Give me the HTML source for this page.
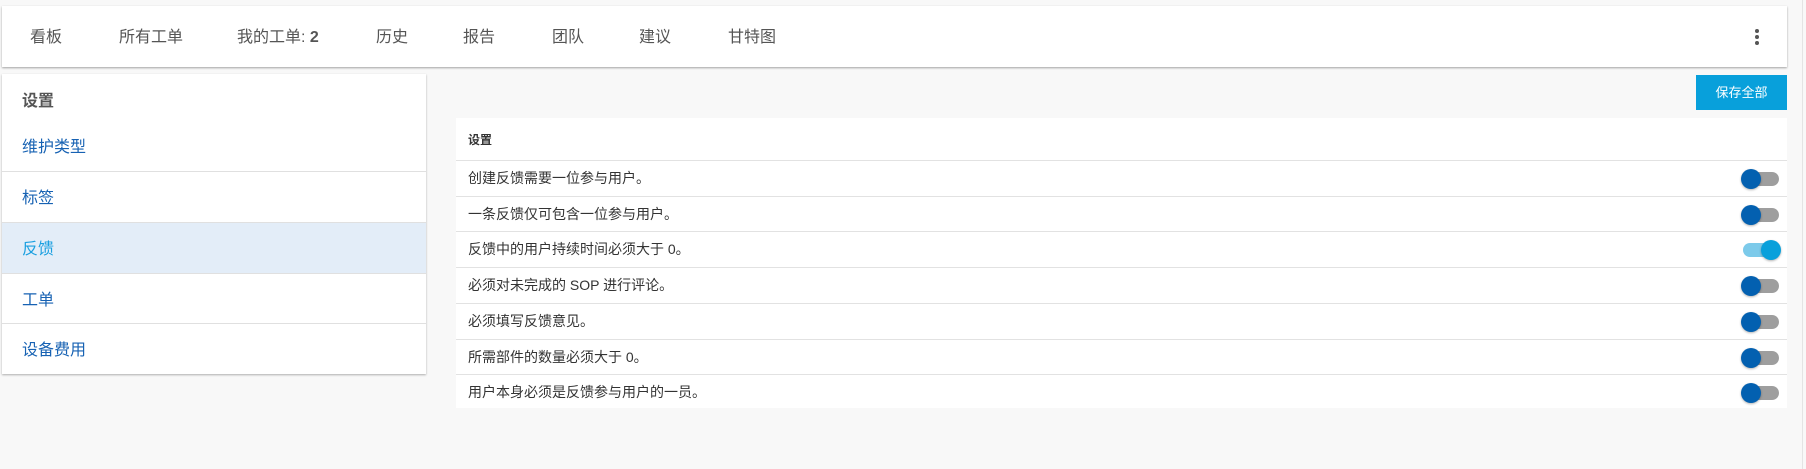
<!DOCTYPE html>
<html><head><meta charset="utf-8"><style>
*{margin:0;padding:0;box-sizing:border-box}
body{width:1806px;height:469px;background:#f8f8f8;font-family:"Liberation Sans","Noto Sans CJK SC",sans-serif;position:relative;overflow:hidden}
.nav{position:absolute;left:2px;top:6px;width:1785px;height:61px;background:#fff;box-shadow:0 1px 2px rgba(0,0,0,.35)}
.nav span{position:absolute;top:22px;font-size:16px;color:#555;line-height:20px}
.kebab{position:absolute;left:1753px;top:23px;width:4px}
.kebab i{display:block;width:4px;height:4px;border-radius:2px;background:#555;margin-bottom:2px}
.left{position:absolute;left:2px;top:74px;width:424px;height:300px;background:#fff;box-shadow:0 1px 2px rgba(0,0,0,.3)}
.left .t{position:absolute;left:20px;top:13px;font-size:16px;color:#555;font-weight:bold}
.item{position:absolute;left:0;width:424px;height:51px;border-top:1px solid #e0e0e0;font-size:16px;color:#1762b3;padding-left:20px;line-height:54px}
.btn{position:absolute;left:1696px;top:75px;width:91px;height:35px;background:#08a0db;color:#fff;font-size:13px;text-align:center;line-height:35px}
.tbl{position:absolute;left:456px;top:118px;width:1331px;height:290px;background:#fff}
.hdr{position:absolute;left:12px;top:13px;font-size:12px;font-weight:bold;color:#333}
.row{position:absolute;left:0;width:1331px;height:36px;border-top:1.5px solid #e2e2e2;font-size:14px;color:#333;padding-left:12px;line-height:34px}
.tg{position:absolute;left:1287px;top:11px;width:36px;height:14px;border-radius:7px;background:#9e9e9e}
.tg b{position:absolute;left:-2px;top:-3px;width:20px;height:20px;border-radius:10px;background:#0360b0;box-shadow:0 1px 2px rgba(0,0,0,.3)}
.tg.on{background:#7ccaea}.tg.on b{left:18px;background:#08a0db}
</style></head><body>
<div class="nav">
<span style="left:28px">看板</span><span style="left:117px">所有工单</span><span style="left:235px">我的工单: <b>2</b></span><span style="left:374px">历史</span><span style="left:461px">报告</span><span style="left:550px">团队</span><span style="left:637px">建议</span><span style="left:726px">甘特图</span>
<div class="kebab"><i></i><i></i><i></i></div>
</div>
<div class="left">
<div class="t">设置</div>
<div class="item" style="top:47px;border-top:none">维护类型</div>
<div class="item" style="top:97px">标签</div>
<div class="item" style="top:148px;background:#e3edf8;color:#1a9fe0">反馈</div>
<div class="item" style="top:199px">工单</div>
<div class="item" style="top:249px">设备费用</div>
</div>
<div class="btn">保存全部</div>
<div class="tbl">
<div class="hdr">设置</div>
<div class="row" style="top:42px">创建反馈需要一位参与用户。<div class="tg"><b></b></div></div>
<div class="row" style="top:78px">一条反馈仅可包含一位参与用户。<div class="tg"><b></b></div></div>
<div class="row" style="top:113px">反馈中的用户持续时间必须大于 0。<div class="tg on"><b></b></div></div>
<div class="row" style="top:149px">必须对未完成的 SOP 进行评论。<div class="tg"><b></b></div></div>
<div class="row" style="top:185px">必须填写反馈意见。<div class="tg"><b></b></div></div>
<div class="row" style="top:221px">所需部件的数量必须大于 0。<div class="tg"><b></b></div></div>
<div class="row" style="top:256px">用户本身必须是反馈参与用户的一员。<div class="tg"><b></b></div></div>
</div>
<div style="position:absolute;left:1802px;top:0;width:1px;height:469px;background:#e4e4e4"></div>
</body></html>
